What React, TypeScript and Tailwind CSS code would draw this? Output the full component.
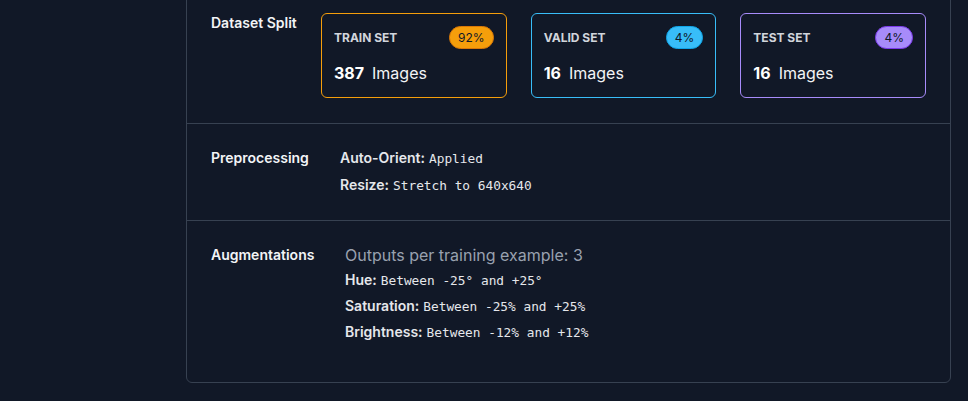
const splits = [
  { name: "Train Set", count: 387, pct: "92%", border: "border-[#f59e0b]", badge: "bg-[#f59e0b] border-[#d97706]" },
  { name: "Valid Set", count: 16, pct: "4%", border: "border-[#38bdf8]", badge: "bg-[#38bdf8] border-[#0ea5e9]" },
  { name: "Test Set", count: 16, pct: "4%", border: "border-[#a78bfa]", badge: "bg-[#a78bfa] border-[#7c3aed]" },
];

const mono = "font-['DejaVu_Sans_Mono',monospace] text-[12.8px] font-normal text-gray-200";

function Item({ label, value }: { label: string; value: string }) {
  return (
    <div className="flex h-5 items-baseline gap-1 text-sm leading-5">
      <span className="font-semibold text-gray-200">{label}:</span>
      <span className={mono}>{value}</span>
    </div>
  );
}

export default function App() {
  return (
    <div className="h-[401px] overflow-hidden bg-[#111827] font-['Inter',sans-serif]">
      <div className="ml-[186px] -mt-[12px] w-[765px] rounded-md border border-[#374151] divide-y divide-[#374151]">
        {/* Dataset split */}
        <div className="flex px-6 pt-6 pb-[25px]">
          <div className="w-[110px] shrink-0 text-sm font-semibold leading-5 text-gray-100">Dataset Split</div>
          <div className="grid flex-1 grid-cols-3 gap-6">
            {splits.map((s) => (
              <div key={s.name} className={`rounded-md border p-3 ${s.border}`}>
                <div className="flex h-[23px] items-center justify-between">
                  <span className="text-xs font-bold uppercase text-gray-300">{s.name}</span>
                  <span className={`flex h-[23px] items-center rounded-full border px-2 text-xs text-gray-900 ${s.badge}`}>
                    {s.pct}
                  </span>
                </div>
                <div className="mt-3 flex items-baseline gap-2 text-base leading-6 text-gray-100">
                  <span className="font-bold text-white">{s.count}</span>
                  <span>Images</span>
                </div>
              </div>
            ))}
          </div>
        </div>

        {/* Preprocessing */}
        <div className="flex px-6 pt-6 pb-[25px]">
          <div className="w-[129px] shrink-0 text-sm font-semibold leading-5 text-gray-100">Preprocessing</div>
          <div className="flex flex-col gap-[7px]">
            <Item label="Auto-Orient" value="Applied" />
            <Item label="Resize" value="Stretch to 640x640" />
          </div>
        </div>

        {/* Augmentations */}
        <div className="flex px-6 pt-6 pb-10">
          <div className="w-[134px] shrink-0 text-sm font-semibold leading-5 text-gray-100">Augmentations</div>
          <div className="flex flex-col gap-[6px]">
            <div className="mb-[-1px] text-base leading-5 text-gray-400">Outputs per training example: 3</div>
            <Item label="Hue" value="Between -25° and +25°" />
            <Item label="Saturation" value="Between -25% and +25%" />
            <Item label="Brightness" value="Between -12% and +12%" />
          </div>
        </div>
      </div>
    </div>
  );
}
